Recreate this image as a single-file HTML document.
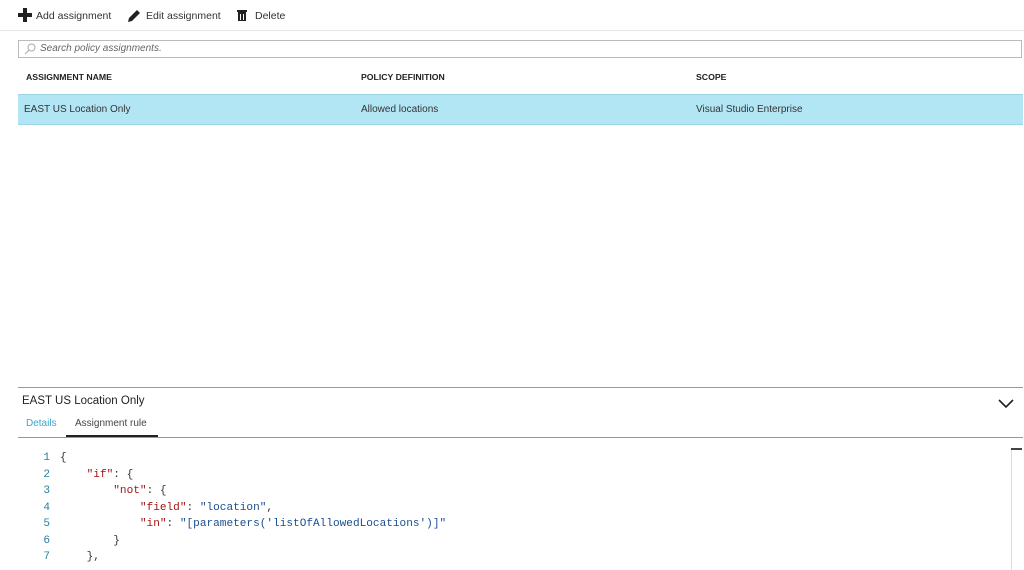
<!DOCTYPE html>
<html><head><style>
body{margin:0;width:1024px;height:570px;overflow:hidden;background:#fff;font-family:"Liberation Sans",sans-serif;color:#333;position:relative}
.a{position:absolute}
.tb{font-size:10.5px;color:#333;top:10px}
.hd{font-size:8.7px;font-weight:bold;color:#222;top:72px}
.code{font-family:"Liberation Mono",monospace;font-size:11.1px;white-space:pre;line-height:16.5px;top:450px;left:60px;color:#333}
.ln{font-family:"Liberation Mono",monospace;font-size:11.1px;line-height:16.5px;top:450px;left:30px;width:20px;text-align:right;color:#2b7fa0;white-space:pre}
.k{color:#a31515}.s{color:#1a4f8f}
</style></head><body>
<svg class="a" style="left:18px;top:8px" width="14" height="14"><rect x="5" y="0" width="4" height="14" fill="#222"/><rect x="0" y="5" width="14" height="4" fill="#222"/></svg>
<div class="a tb" style="left:36px">Add assignment</div>
<svg class="a" style="left:127px;top:8px" width="15" height="15"><path d="M1 14 L2 10 L10 2 L13 5 L5 13 Z" fill="#222"/></svg>
<div class="a tb" style="left:146px">Edit assignment</div>
<svg class="a" style="left:237px;top:9px" width="11" height="12"><rect x="0" y="1" width="10" height="2" fill="#222"/><rect x="1" y="3" width="8" height="9" fill="#222"/><rect x="3" y="5" width="1" height="6" fill="#fff"/><rect x="6" y="5" width="1" height="6" fill="#fff"/></svg>
<div class="a tb" style="left:255px">Delete</div>
<div class="a" style="left:0;top:30px;width:1024px;height:1px;background:#e5e5e5"></div>
<div class="a" style="left:18px;top:40px;width:1004px;height:18px;border:1px solid #bbb;box-sizing:border-box"></div>
<svg class="a" style="left:24px;top:43px" width="12" height="12"><circle cx="7.5" cy="4.5" r="3.5" fill="none" stroke="#aaa"/><line x1="5" y1="7" x2="1" y2="11" stroke="#aaa"/></svg>
<div class="a" style="left:40px;top:43px;font-size:10px;font-style:italic;color:#666">Search policy assignments.</div>
<div class="a hd" style="left:26px">ASSIGNMENT NAME</div>
<div class="a hd" style="left:361px">POLICY DEFINITION</div>
<div class="a hd" style="left:696px">SCOPE</div>
<div class="a" style="left:18px;top:94px;width:1005px;height:31px;background:#b3e6f5;border-top:1px solid #9cd3e6;border-bottom:1px solid #9cd3e6;box-sizing:border-box"></div>
<div class="a" style="left:24px;top:104px;font-size:10px;color:#333">EAST US Location Only</div>
<div class="a" style="left:361px;top:104px;font-size:10px;color:#333">Allowed locations</div>
<div class="a" style="left:696px;top:104px;font-size:10px;color:#333">Visual Studio Enterprise</div>
<div class="a" style="left:18px;top:387px;width:1005px;height:1px;background:#999"></div>
<div class="a" style="left:22px;top:395px;font-size:11.5px;color:#222">EAST US Location Only</div>
<svg class="a" style="left:997px;top:398px" width="20" height="12"><path d="M2 2 L9 9 L16 2" fill="none" stroke="#222" stroke-width="1.6"/></svg>
<div class="a" style="left:26px;top:418px;font-size:10px;color:#3aa6d0">Details</div>
<div class="a" style="left:75px;top:418px;font-size:10px;color:#444">Assignment rule</div>
<div class="a" style="left:66px;top:435px;width:92px;height:2px;background:#222"></div>
<div class="a" style="left:18px;top:437px;width:1005px;height:1px;background:#999"></div>
<div class="a" style="left:1011px;top:448px;width:11px;height:2px;background:#444"></div>
<div class="a" style="left:1011px;top:450px;width:1px;height:120px;background:#ddd"></div>
<div class="a ln">1
2
3
4
5
6
7</div>
<div class="a code">{
    <span class="k">"if"</span>: {
        <span class="k">"not"</span>: {
            <span class="k">"field"</span>: <span class="s">"location"</span>,
            <span class="k">"in"</span>: <span class="s">"[parameters('listOfAllowedLocations')]"</span>
        }
    },</div>
</body></html>
